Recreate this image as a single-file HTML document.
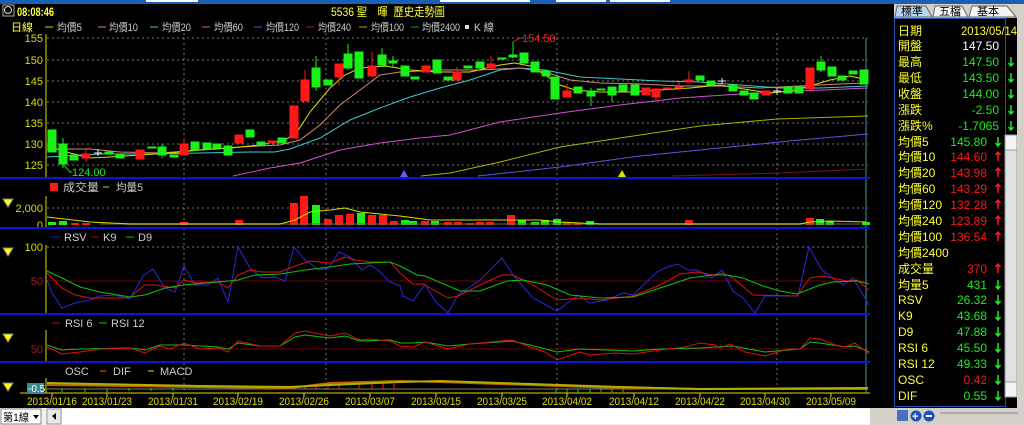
<!DOCTYPE html>
<html><head><meta charset="utf-8"><style>
html,body{margin:0;padding:0;background:#000;width:1024px;height:425px;overflow:hidden}
svg{display:block}
text{font-family:"Liberation Sans","Noto Sans CJK TC",sans-serif}
</style></head><body>
<svg width="1024" height="425" viewBox="0 0 1024 425" xmlns="http://www.w3.org/2000/svg">
<rect width="1024" height="425" fill="#000"/>
<rect x="0" y="0" width="1024" height="4" fill="#1a5fb4"/>
<rect x="146" y="0" width="52" height="2" fill="#fff"/><rect x="440" y="0" width="90" height="2" fill="#fff"/>
<rect x="556" y="0" width="50" height="2" fill="#fff"/><rect x="610" y="0" width="60" height="2" fill="#fff"/>
<rect x="870" y="0" width="154" height="4" fill="#1a5fb4"/>
<rect x="3" y="5" width="11" height="11" fill="none" stroke="#aaa"/><circle cx="8" cy="10" r="3.5" fill="none" stroke="#ddd"/>
<text x="17" y="16" fill="#ffff33" font-size="12" font-weight="bold" textLength="37" lengthAdjust="spacingAndGlyphs">08:08:46</text>
<text x="331" y="16" fill="#ffff33" font-size="12" textLength="114" lengthAdjust="spacingAndGlyphs">5536 聖　暉&#160; 歷史走勢圖</text>
<g font-size="11">
<text x="11" y="31" fill="#ffff33">日線</text>
<line x1="45" y1="27" x2="53" y2="27" stroke="#dddd00"/><text x="57" y="31" fill="#ccc" textLength="25" lengthAdjust="spacingAndGlyphs">均價5</text>
<line x1="98" y1="27" x2="106" y2="27" stroke="#e08870"/><text x="109" y="31" fill="#ccc" textLength="29" lengthAdjust="spacingAndGlyphs">均價10</text>
<line x1="150" y1="27" x2="158" y2="27" stroke="#40d0d0"/><text x="162" y="31" fill="#ccc" textLength="29" lengthAdjust="spacingAndGlyphs">均價20</text>
<line x1="202" y1="27" x2="210" y2="27" stroke="#d050d0"/><text x="214" y="31" fill="#ccc" textLength="29" lengthAdjust="spacingAndGlyphs">均價60</text>
<line x1="254" y1="27" x2="262" y2="27" stroke="#5050e0"/><text x="266" y="31" fill="#ccc" textLength="33" lengthAdjust="spacingAndGlyphs">均價120</text>
<line x1="306" y1="27" x2="314" y2="27" stroke="#a02020"/><text x="318" y="31" fill="#ccc" textLength="33" lengthAdjust="spacingAndGlyphs">均價240</text>
<line x1="359" y1="27" x2="367" y2="27" stroke="#b0b000"/><text x="371" y="31" fill="#ccc" textLength="33" lengthAdjust="spacingAndGlyphs">均價100</text>
<line x1="411" y1="27" x2="419" y2="27" stroke="#00a040"/><text x="422" y="31" fill="#ccc" textLength="38" lengthAdjust="spacingAndGlyphs">均價2400</text>
<rect x="465" y="25" width="4" height="4" fill="#ddd"/><text x="474" y="31" fill="#ccc" textLength="20" lengthAdjust="spacingAndGlyphs">K 線</text>
</g>
<g stroke="#777" stroke-dasharray="2,3" stroke-width="1">
<line x1="47" y1="38" x2="868" y2="38"/><line x1="47" y1="60" x2="868" y2="60"/><line x1="47" y1="81" x2="868" y2="81"/>
<line x1="47" y1="102" x2="868" y2="102"/><line x1="47" y1="123" x2="868" y2="123"/><line x1="47" y1="144" x2="868" y2="144"/>
<line x1="47" y1="165" x2="868" y2="165"/>
<line x1="47" y1="208" x2="868" y2="208"/><line x1="47" y1="247" x2="868" y2="247"/>
<line x1="184" y1="33" x2="184" y2="393"/><line x1="326" y1="33" x2="326" y2="393"/>
<line x1="557" y1="33" x2="557" y2="393"/><line x1="777" y1="33" x2="777" y2="393"/>
</g>
<g stroke="#dddd00"><line x1="46" y1="34" x2="46" y2="177"/><line x1="46" y1="196" x2="46" y2="227"/><line x1="46" y1="245" x2="46" y2="313"/><line x1="46" y1="330" x2="46" y2="361"/><line x1="46" y1="378" x2="46" y2="393"/>
<line x1="20" y1="393" x2="880" y2="393"/></g>
<g font-size="11" fill="#dddd00" text-anchor="end">
<text x="43" y="42">155</text><text x="43" y="64">150</text><text x="43" y="85">145</text><text x="43" y="106">140</text><text x="43" y="127">135</text><text x="43" y="148">130</text><text x="43" y="169">125</text>
<text x="43" y="212">2,000</text><text x="43" y="229">0</text><text x="43" y="251">100</text>
</g>
<text x="43" y="285" fill="#a02020" font-size="11" text-anchor="end">50</text>
<text x="43" y="353" fill="#a02020" font-size="11" text-anchor="end">50</text>
<line x1="47" y1="281" x2="868" y2="281" stroke="#700"/>
<line x1="47" y1="349" x2="868" y2="349" stroke="#700"/>
<line x1="866" y1="38" x2="866" y2="393" stroke="#3a9a9a"/>
<g stroke="#1010e0" stroke-width="2"><line x1="0" y1="178" x2="894" y2="178"/><line x1="0" y1="228" x2="894" y2="228"/><line x1="0" y1="314" x2="894" y2="314"/><line x1="0" y1="362" x2="894" y2="362"/></g>
<g fill="none" stroke-width="1">
<polyline stroke="#701818" points="672,176 780,173 868,169"/>
<polyline stroke="#5858e0" points="478,176 560,167 640,156 720,148 800,140 868,134"/>
<polyline stroke="#b0b000" points="421,176 450,173 500,162 560,147 620,138 700,126 777,119 868,116"/>
<polyline stroke="#d050d0" points="233,176 270,168 300,163 340,150 380,143 420,138 450,135 500,122 560,113 620,105 680,98 740,94 800,91 868,88"/>
<polyline stroke="#40c8c8" points="47,157 100,154 150,154 200,153 250,152 275,152 290,149 320,138 350,120 380,108 410,97 440,88 470,80 500,70 520,68 545,70 580,77 620,79 660,81 700,82 740,85 780,88 820,88 868,86"/>
<polyline stroke="#d08878" points="47,149 90,149 120,152 160,153 200,150 240,147 280,145 300,140 320,125 340,105 360,90 380,75 400,72 440,70 480,70 520,68 545,72 570,80 600,83 640,84 680,86 720,86 760,88 800,86 840,84 868,83"/>
<polyline stroke="#dddd00" points="47,146 70,153 90,158 110,157 140,155 170,153 200,150 230,148 260,145 285,140 297,132 310,112 330,88 345,75 360,68 385,66 410,70 440,72 470,72 500,65 515,63 530,66 545,75 560,85 575,90 600,92 630,92 660,90 690,88 720,85 750,90 770,93 790,91 810,86 830,80 850,76 868,80"/>
</g>
<g stroke-width="1">
<g fill="#18f018" stroke="#18f018">
<line x1="63" y1="138" x2="63" y2="168"/><line x1="316" y1="56" x2="316" y2="91"/><line x1="348" y1="44" x2="348" y2="70"/><line x1="382" y1="48" x2="382" y2="67"/><line x1="393" y1="56" x2="393" y2="68"/><line x1="513" y1="42" x2="513" y2="58"/><line x1="612" y1="88" x2="612" y2="102"/><line x1="591" y1="88" x2="591" y2="106"/><line x1="821" y1="56" x2="821" y2="72"/><line x1="162" y1="144" x2="162" y2="158"/>
<rect x="48" y="130" width="8" height="22"/><rect x="59" y="144" width="8" height="20"/><rect x="70" y="155" width="8" height="5"/>
<rect x="105" y="152" width="8" height="2"/><rect x="116" y="154" width="8" height="4"/><rect x="148" y="147" width="8" height="1"/><rect x="158" y="147" width="8" height="8"/><rect x="170" y="155" width="8" height="2"/>
<rect x="191" y="142" width="8" height="8"/><rect x="203" y="143" width="8" height="6"/><rect x="213" y="144" width="8" height="4"/><rect x="224" y="146" width="8" height="9"/>
<rect x="246" y="130" width="8" height="7"/><rect x="257" y="142" width="8" height="3"/><rect x="278" y="138" width="8" height="5"/>
<rect x="312" y="68" width="8" height="19"/><rect x="324" y="80" width="8" height="5"/><rect x="344" y="54" width="8" height="14"/><rect x="355" y="52" width="8" height="26"/>
<rect x="378" y="55" width="8" height="10"/><rect x="389" y="61" width="8" height="2"/><rect x="401" y="66" width="8" height="10"/><rect x="411" y="77" width="8" height="2"/>
<rect x="433" y="60" width="8" height="13"/><rect x="444" y="77" width="8" height="3"/><rect x="464" y="66" width="8" height="2"/><rect x="476" y="62" width="8" height="6"/>
<rect x="498" y="58" width="8" height="1"/><rect x="509" y="55" width="8" height="2"/><rect x="520" y="53" width="8" height="10"/><rect x="531" y="62" width="8" height="10"/><rect x="542" y="71" width="8" height="5"/>
<rect x="551" y="77" width="8" height="22"/><rect x="574" y="87" width="8" height="6"/><rect x="587" y="91" width="8" height="5"/><rect x="597" y="89" width="8" height="1"/>
<rect x="608" y="87" width="8" height="8"/><rect x="619" y="85" width="8" height="6"/><rect x="631" y="85" width="8" height="10"/>
<rect x="696" y="76" width="8" height="4"/><rect x="707" y="81" width="8" height="4"/><rect x="729" y="85" width="8" height="6"/><rect x="740" y="91" width="8" height="4"/><rect x="750" y="93" width="8" height="6"/>
<rect x="784" y="87" width="8" height="6"/><rect x="795" y="87" width="8" height="6"/><rect x="817" y="62" width="8" height="8"/><rect x="828" y="67" width="8" height="9"/><rect x="838" y="76" width="8" height="4"/><rect x="849" y="71" width="8" height="3"/><rect x="860" y="70" width="8" height="14"/>
</g>
<g fill="#ff1818" stroke="#ff1818">
<line x1="86" y1="148" x2="86" y2="162"/><line x1="184" y1="138" x2="184" y2="155"/><line x1="305" y1="70" x2="305" y2="101"/><line x1="339" y1="64" x2="339" y2="85"/><line x1="372" y1="52" x2="372" y2="76"/><line x1="457" y1="67" x2="457" y2="80"/><line x1="491" y1="56" x2="491" y2="68"/><line x1="567" y1="84" x2="567" y2="97"/><line x1="656" y1="88" x2="656" y2="102"/><line x1="689" y1="71" x2="689" y2="82"/><line x1="679" y1="82" x2="679" y2="90"/><line x1="810" y1="68" x2="810" y2="92"/>
<rect x="82" y="154" width="8" height="4"/><rect x="136" y="150" width="8" height="9"/><rect x="180" y="144" width="8" height="11"/>
<rect x="235" y="135" width="8" height="8"/><rect x="268" y="141" width="8" height="2"/><rect x="290" y="106" width="8" height="32"/><rect x="301" y="80" width="8" height="21"/>
<rect x="335" y="64" width="8" height="13"/><rect x="368" y="66" width="8" height="10"/><rect x="422" y="66" width="8" height="6"/><rect x="453" y="72" width="8" height="8"/>
<rect x="487" y="64" width="8" height="4"/><rect x="563" y="91" width="8" height="6"/><rect x="642" y="88" width="8" height="7"/><rect x="652" y="89" width="8" height="8"/>
<rect x="663" y="88" width="8" height="1"/><rect x="675" y="87" width="8" height="1"/><rect x="685" y="80" width="8" height="2"/><rect x="762" y="91" width="8" height="4"/><rect x="806" y="68" width="8" height="21"/>
</g>
<g stroke="#eee"><line x1="94" y1="153" x2="102" y2="153"/><line x1="98" y1="149" x2="98" y2="156"/><line x1="718" y1="81" x2="726" y2="81"/><line x1="722" y1="78" x2="722" y2="84"/><line x1="773" y1="91" x2="781" y2="91"/><line x1="777" y1="88" x2="777" y2="95"/></g>
</g>
<polyline points="63,164 70,172 72,172" fill="none" stroke="#18d018"/>
<text x="72" y="176" fill="#18f018" font-size="11">124.00</text>
<polyline points="513,42 520,38 522,38" fill="none" stroke="#ff2020"/>
<text x="522" y="42" fill="#ff2020" font-size="11">154.50</text>
<polygon points="400,177 404,170 408,177" fill="#6060ff"/>
<polygon points="618,177 622,170 626,177" fill="#e0e000"/>
<rect x="50" y="183" width="8" height="8" fill="#ff1818"/><text x="63" y="191" fill="#ccc" font-size="11" textLength="36" lengthAdjust="spacingAndGlyphs">成交量</text>
<line x1="103" y1="187" x2="109" y2="187" stroke="#dddd00"/><text x="116" y="191" fill="#ccc" font-size="11" textLength="27" lengthAdjust="spacingAndGlyphs">均量5</text>
<g fill="#18f018">
<rect x="48" y="222" width="8" height="3"/><rect x="59" y="221" width="8" height="4"/><rect x="312" y="205" width="8" height="20"/><rect x="357" y="213" width="8" height="12"/>
<rect x="401" y="220" width="8" height="5"/><rect x="409" y="221" width="8" height="4"/><rect x="431" y="221" width="8" height="4"/><rect x="518" y="220" width="8" height="5"/><rect x="531" y="222" width="8" height="3"/><rect x="541" y="220" width="8" height="5"/><rect x="553" y="219" width="8" height="6"/><rect x="586" y="221" width="8" height="4"/>
<rect x="816" y="219" width="8" height="6"/><rect x="826" y="221" width="8" height="4"/><rect x="862" y="222" width="8" height="3"/>
</g>
<g fill="#ff1818">
<rect x="71" y="223" width="8" height="2"/><rect x="82" y="223" width="8" height="2"/><rect x="180" y="222" width="8" height="3"/><rect x="235" y="220" width="8" height="5"/>
<rect x="290" y="203" width="8" height="22"/><rect x="300" y="196" width="8" height="29"/><rect x="324" y="219" width="8" height="6"/><rect x="335" y="215" width="8" height="10"/><rect x="346" y="214" width="8" height="11"/>
<rect x="368" y="215" width="8" height="10"/><rect x="379" y="215" width="8" height="10"/><rect x="390" y="221" width="8" height="4"/>
<rect x="421" y="221" width="8" height="4"/><rect x="444" y="222" width="8" height="3"/><rect x="454" y="222" width="8" height="3"/><rect x="466" y="223" width="8" height="2"/><rect x="476" y="222" width="8" height="3"/><rect x="486" y="222" width="8" height="3"/>
<rect x="507" y="215" width="8" height="10"/><rect x="563" y="222" width="8" height="3"/><rect x="574" y="223" width="8" height="2"/><rect x="685" y="220" width="8" height="5"/><rect x="806" y="218" width="8" height="7"/>
</g>
<g fill="#666"><rect x="100" y="223" width="760" height="2" opacity="0.5"/></g>
<polyline fill="none" stroke="#dddd00" points="47,217 90,222 130,224 280,224 295,220 310,212 330,210 345,208 360,212 380,214 400,216 430,220 500,220 540,220 560,222 600,224 800,224 810,222 830,221 866,222"/>
<g font-size="11"><line x1="52" y1="237" x2="60" y2="237" stroke="#2020d0"/><text x="64" y="241" fill="#ccc">RSV</text>
<line x1="91" y1="237" x2="99" y2="237" stroke="#c00"/><text x="103" y="241" fill="#ccc">K9</text>
<line x1="126" y1="237" x2="134" y2="237" stroke="#0c0"/><text x="138" y="241" fill="#ccc">D9</text></g>
<polyline fill="none" stroke="#2828e0" points="47,280 52,293 62,308 75,303 90,300 100,296 115,295 130,299 143,276 153,269 165,288 175,292 184,266 195,285 208,285 218,278 228,302 238,247 250,268 262,278 275,277 285,281 294,247 305,260 318,269 328,269 339,252 350,257 362,270 370,265 378,270 390,282 400,286 403,296 413,301 425,284 435,301 448,313 458,295 480,280 502,258 513,275 533,298 557,311 578,295 590,303 607,300 623,293 633,295 657,272 667,267 678,264 688,270 697,270 712,278 722,270 733,291 743,298 755,313 765,296 780,296 798,296 809,247 822,270 833,278 843,285 853,278 869,305"/>
<polyline fill="none" stroke="#e01010" points="47,273 62,288 75,295 90,298 125,298 130,297 145,285 155,285 175,288 184,280 195,283 218,282 228,288 238,275 250,270 262,272 280,272 295,266 310,261 330,263 345,257 356,260 370,262 390,262 400,273 413,284 423,284 448,298 458,296 480,285 502,275 513,275 533,285 557,300 580,298 600,300 633,296 660,285 680,274 697,272 713,275 723,273 733,278 753,295 797,296 810,278 823,276 847,281 857,280 869,290"/>
<polyline fill="none" stroke="#10c010" points="47,271 62,278 80,287 100,292 130,297 145,295 165,288 184,285 218,282 238,280 255,275 280,274 305,270 330,267 350,264 390,262 400,266 417,275 425,276 460,291 480,291 507,281 523,280 547,285 570,295 600,298 633,297 660,288 690,278 713,275 727,275 743,278 763,286 780,291 797,294 820,285 833,282 857,281 869,284"/>
<g font-size="11"><line x1="52" y1="323" x2="60" y2="323" stroke="#c00"/><text x="65" y="327" fill="#ccc">RSI 6</text>
<line x1="99" y1="323" x2="107" y2="323" stroke="#0c0"/><text x="111" y="327" fill="#ccc">RSI 12</text></g>
<polyline fill="none" stroke="#10c010" points="47,345 62,350 80,349 130,348 145,350 160,345 184,345 218,347 228,349 238,343 260,346 280,346 295,337 305,335 330,338 345,336 360,341 390,340 400,343 413,343 425,342 448,346 470,344 512,341 530,345 557,352 580,349 633,351 660,349 700,348 733,346 765,352 800,349 810,342 820,343 845,347 855,346 869,352"/>
<polyline fill="none" stroke="#e01010" points="47,347 62,354 80,352 100,349 130,348 145,353 160,346 170,349 184,343 200,349 218,348 228,352 238,341 260,346 280,346 295,333 305,331 330,336 345,333 360,340 370,339 390,341 400,346 413,347 425,342 448,349 470,344 512,340 530,347 545,352 557,360 580,352 590,355 615,353 633,354 660,350 685,347 700,343 715,345 720,348 730,344 745,352 765,356 788,349 800,349 810,338 820,339 835,345 845,347 855,343 869,354"/>
<g font-size="11"><text x="65" y="375" fill="#ccc">OSC</text><line x1="100" y1="371" x2="106" y2="371" stroke="#e07000"/><text x="113" y="375" fill="#ccc">DIF</text>
<line x1="148" y1="371" x2="154" y2="371" stroke="#dddd00"/><text x="160" y="375" fill="#ccc">MACD</text></g>
<rect x="27" y="383" width="17" height="11" fill="#3a8a8a"/><text x="28" y="392" fill="#fff" font-size="10">-0.5</text>
<line x1="47" y1="389" x2="868" y2="389" stroke="#777"/>
<g stroke="#18d018"><line x1="62" y1="388" x2="62" y2="392"/><line x1="85" y1="388" x2="85" y2="392"/><line x1="107" y1="388" x2="107" y2="392"/><line x1="129" y1="388" x2="129" y2="391"/><line x1="151" y1="388" x2="151" y2="391"/><line x1="173" y1="388" x2="173" y2="391"/><line x1="556" y1="389" x2="556" y2="393"/><line x1="567" y1="389" x2="567" y2="393"/><line x1="578" y1="389" x2="578" y2="393"/><line x1="590" y1="389" x2="590" y2="393"/><line x1="601" y1="389" x2="601" y2="392"/><line x1="612" y1="389" x2="612" y2="392"/><line x1="623" y1="389" x2="623" y2="392"/></g>
<g stroke="#ff2020"><line x1="305" y1="386" x2="305" y2="389"/><line x1="316" y1="385" x2="316" y2="389"/><line x1="328" y1="385" x2="328" y2="389"/><line x1="339" y1="384" x2="339" y2="389"/><line x1="359" y1="383" x2="359" y2="389"/><line x1="372" y1="383" x2="372" y2="389"/><line x1="383" y1="383" x2="383" y2="389"/><line x1="394" y1="384" x2="394" y2="389"/></g>
<polyline fill="none" stroke="#c06000" stroke-width="2" points="47,385 200,387 290,388 330,383 400,381 440,382 500,384 560,386 620,388 700,389 868,389"/>
<polyline fill="none" stroke="#b0b000" stroke-width="2" points="47,383 200,386 290,387 330,385 400,382 440,381 500,383 560,385 620,387 700,389 868,388"/>
<g stroke="#dddd00"><line x1="52" y1="393" x2="52" y2="397"/><line x1="107" y1="393" x2="107" y2="397"/><line x1="173" y1="393" x2="173" y2="397"/><line x1="238" y1="393" x2="238" y2="397"/><line x1="304" y1="393" x2="304" y2="397"/><line x1="370" y1="393" x2="370" y2="397"/><line x1="436" y1="393" x2="436" y2="397"/><line x1="502" y1="393" x2="502" y2="397"/><line x1="567" y1="393" x2="567" y2="397"/><line x1="634" y1="393" x2="634" y2="397"/><line x1="700" y1="393" x2="700" y2="397"/><line x1="765" y1="393" x2="765" y2="397"/><line x1="831" y1="393" x2="831" y2="397"/></g>
<g font-size="11" fill="#dddd00" lengthAdjust="spacingAndGlyphs">
<text x="27" y="405" textLength="50" lengthAdjust="spacingAndGlyphs">2013/01/16</text><text x="82" y="405" textLength="50" lengthAdjust="spacingAndGlyphs">2013/01/23</text><text x="148" y="405" textLength="50" lengthAdjust="spacingAndGlyphs">2013/01/31</text><text x="213" y="405" textLength="50" lengthAdjust="spacingAndGlyphs">2013/02/19</text><text x="279" y="405" textLength="50" lengthAdjust="spacingAndGlyphs">2013/02/26</text><text x="345" y="405" textLength="50" lengthAdjust="spacingAndGlyphs">2013/03/07</text><text x="411" y="405" textLength="50" lengthAdjust="spacingAndGlyphs">2013/03/15</text><text x="477" y="405" textLength="50" lengthAdjust="spacingAndGlyphs">2013/03/25</text><text x="542" y="405" textLength="50" lengthAdjust="spacingAndGlyphs">2013/04/02</text><text x="609" y="405" textLength="50" lengthAdjust="spacingAndGlyphs">2013/04/12</text><text x="675" y="405" textLength="50" lengthAdjust="spacingAndGlyphs">2013/04/22</text><text x="740" y="405" textLength="50" lengthAdjust="spacingAndGlyphs">2013/04/30</text><text x="806" y="405" textLength="50" lengthAdjust="spacingAndGlyphs">2013/05/09</text>
</g>
<g fill="#ffff00" stroke="#888"><polygon points="3,199 13,199 8,207"/><polygon points="3,248 13,248 8,256"/><polygon points="3,334 13,334 8,342"/><polygon points="3,383 13,383 8,391"/></g>
<rect x="0" y="408" width="894" height="17" fill="#f0f0f0"/>
<rect x="1" y="409" width="40" height="15" fill="#fff" stroke="#888"/><text x="3" y="421" font-size="11" fill="#000" textLength="26" lengthAdjust="spacingAndGlyphs">第1線</text>
<polygon points="33,415 39,415 36,419" fill="#000"/>
<rect x="47" y="409" width="14" height="15" fill="#e8e8e8" stroke="#999"/><polygon points="56,413 56,420 52,416" fill="#000"/>
<rect x="62" y="409" width="832" height="15" fill="#fff"/>
<rect x="870" y="4" width="154" height="421" fill="#d4d0c8"/>
<rect x="870" y="4" width="24" height="404" fill="#000"/>
<path d="M895 17 L897 6 L926 6 L932 17 Z" fill="#b8d8f0" stroke="#666"/><text x="901" y="15" font-size="11" fill="#000">標準</text>
<path d="M933 17 L935 6 L962 6 L968 17 Z" fill="#f4f4f4" stroke="#666"/><text x="939" y="15" font-size="11" fill="#000">五檔</text>
<path d="M969 17 L972 6 L1007 6 L1016 17 Z" fill="#f4f4f4" stroke="#666"/><text x="977" y="15" font-size="11" fill="#000">基本</text>
<rect x="894" y="18" width="130" height="390" fill="#000"/>
<rect x="894.5" y="18.5" width="111" height="388" fill="none" stroke="#1a50b0"/>
<rect x="1005" y="135" width="12" height="262" fill="#e0e0e0" stroke="#999"/>
<rect x="1005" y="135" width="12" height="15" fill="#f4f4f4" stroke="#999"/><rect x="1005" y="382" width="12" height="15" fill="#f4f4f4" stroke="#999"/>
<rect x="1017" y="18" width="7" height="390" fill="#d4d0c8"/>
<rect x="894" y="408" width="130" height="17" fill="#d4d0c8"/>
<rect x="897" y="410" width="11" height="11" fill="#4a70c0"/><circle cx="916" cy="416" r="5.5" fill="#2050c0"/><text x="912" y="420" font-size="11" fill="#fff" font-weight="bold">+</text>
<circle cx="929" cy="416" r="5.5" fill="#2050c0"/><rect x="926" y="415" width="6" height="2" fill="#fff"/>
<line x1="940" y1="413" x2="1018" y2="413" stroke="#888"/>
<g font-size="12" fill="#ffff33">
<text x="898" y="35">日期</text><text x="898" y="50">開盤</text><text x="898" y="66">最高</text><text x="898" y="82">最低</text><text x="898" y="98">收盤</text><text x="898" y="114">漲跌</text><text x="898" y="130">漲跌%</text>
<text x="898" y="146">均價5</text><text x="898" y="161">均價10</text><text x="898" y="177">均價20</text><text x="898" y="193">均價60</text><text x="898" y="209">均價120</text><text x="898" y="225">均價240</text><text x="898" y="241">均價100</text><text x="898" y="257">均價2400</text>
<text x="898" y="273">成交量</text><text x="898" y="289">均量5</text><text x="898" y="304">RSV</text><text x="898" y="320">K9</text><text x="898" y="336">D9</text><text x="898" y="352">RSI 6</text><text x="898" y="368">RSI 12</text><text x="898" y="384">OSC</text><text x="898" y="400">DIF</text>
</g>
<g font-size="12" text-anchor="end">
<text x="1017" y="35" fill="#ffff33" textLength="56" lengthAdjust="spacingAndGlyphs">2013/05/14</text><text x="999" y="50" fill="#fff">147.50</text>
<text x="999" y="66" fill="#18f018">147.50</text><text x="999" y="82" fill="#18f018">143.50</text><text x="999" y="98" fill="#18f018">144.00</text><text x="999" y="114" fill="#18f018">-2.50</text><text x="999" y="130" fill="#18f018">-1.7065</text>
<text x="987" y="146" fill="#18f018">145.80</text><text x="987" y="161" fill="#ff1818">144.60</text><text x="987" y="177" fill="#ff1818">143.98</text><text x="987" y="193" fill="#ff1818">143.29</text><text x="987" y="209" fill="#ff1818">132.28</text><text x="987" y="225" fill="#ff1818">123.89</text><text x="987" y="241" fill="#ff1818">136.54</text>
<text x="987" y="273" fill="#ff1818">370</text><text x="987" y="289" fill="#18f018">431</text><text x="987" y="304" fill="#18f018">26.32</text><text x="987" y="320" fill="#18f018">43.68</text><text x="987" y="336" fill="#18f018">47.88</text><text x="987" y="352" fill="#18f018">45.50</text><text x="987" y="368" fill="#18f018">49.33</text><text x="987" y="384" fill="#ff1818">0.42</text><text x="987" y="400" fill="#18f018">0.55</text>
</g>
<g stroke-width="1.5" fill="none">
<g stroke="#18f018">
<path d="M1011 57v9M1008.5 63l2.5 3 2.5-3"/><path d="M1011 73v9M1008.5 79l2.5 3 2.5-3"/><path d="M1011 89v9M1008.5 95l2.5 3 2.5-3"/><path d="M1011 105v9M1008.5 111l2.5 3 2.5-3"/><path d="M1011 121v9M1008.5 127l2.5 3 2.5-3"/>
<path d="M998 137v9M995.5 143l2.5 3 2.5-3"/><path d="M998 280v9M995.5 286l2.5 3 2.5-3"/><path d="M998 295v9M995.5 301l2.5 3 2.5-3"/><path d="M998 311v9M995.5 317l2.5 3 2.5-3"/><path d="M998 327v9M995.5 333l2.5 3 2.5-3"/><path d="M998 343v9M995.5 349l2.5 3 2.5-3"/><path d="M998 359v9M995.5 365l2.5 3 2.5-3"/><path d="M998 375v9M995.5 381l2.5 3 2.5-3"/><path d="M998 391v9M995.5 397l2.5 3 2.5-3"/>
</g>
<g stroke="#ff1818">
<path d="M998 152v9M995.5 155l2.5-3 2.5 3"/><path d="M998 168v9M995.5 171l2.5-3 2.5 3"/><path d="M998 184v9M995.5 187l2.5-3 2.5 3"/><path d="M998 200v9M995.5 203l2.5-3 2.5 3"/><path d="M998 216v9M995.5 219l2.5-3 2.5 3"/><path d="M998 232v9M995.5 235l2.5-3 2.5 3"/><path d="M998 264v9M995.5 267l2.5-3 2.5 3"/>
</g>
</g>
</svg>
</body></html>
